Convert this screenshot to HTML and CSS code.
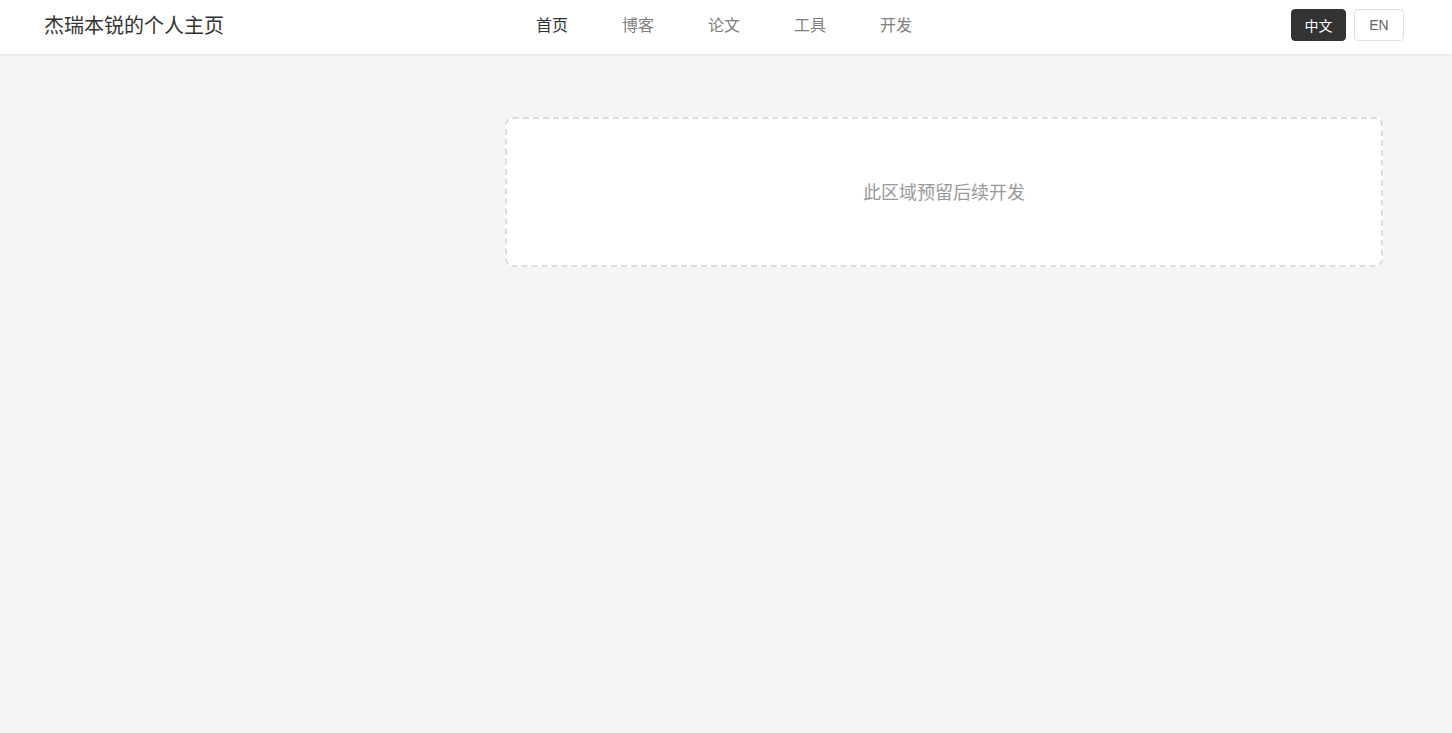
FILE: index.html
```html
<!DOCTYPE html>
<html lang="zh-CN">
<head>
    <meta charset="UTF-8">
    <meta name="viewport" content="width=device-width, initial-scale=1.0">
    <title>杰瑞本锐的个人主页</title>
    <link rel="stylesheet" href="styles.css">
</head>
<body>

    <header class="site-header">
        <div class="logo">杰瑞本锐的个人主页</div>
        <nav class="main-nav">
            <a href="#" class="active">首页</a>
            <a href="#">博客</a>
            <a href="#">论文</a>
            <a href="#">工具</a>
            <a href="#">开发</a>
        </nav>
        <div class="lang-switch">
            <button class="lang-btn current">中文</button>
            <button class="lang-btn">EN</button>
        </div>
    </header>

    <main class="page">
        <aside class="sidebar"></aside>
        <section class="content">
            <div class="placeholder">此区域预留后续开发</div>
        </section>
    </main>

</body>
</html>
```

FILE: styles.css
```css
* {
    box-sizing: border-box;
}
body {
    margin: 0;
    font-family: "Noto Sans CJK SC", "Liberation Sans", sans-serif;
    background-color: #f5f5f5;
    color: #333;
}
.site-header {
    height: 54px;
    background-color: #fff;
    box-shadow: 0 1px 3px rgba(0, 0, 0, 0.08);
    display: grid;
    grid-template-columns: 1fr auto 1fr;
    align-items: center;
    padding: 0 48px 6px 44px;
}
.logo {
    font-size: 20px;
    font-weight: 400;
    color: #333;
}
.main-nav {
    display: flex;
    gap: 54px;
}
.main-nav a {
    font-size: 16px;
    color: #808080;
    text-decoration: none;
}
.main-nav a.active {
    color: #333;
}
.lang-switch {
    display: flex;
    justify-content: flex-end;
    gap: 8px;
    margin-top: 2px;
}
.lang-btn {
    height: 32px;
    min-width: 50px;
    padding: 0 12.5px;
    font-family: "Liberation Sans", "Noto Sans CJK SC", sans-serif;
    font-size: 14px;
    color: #666;
    background-color: #fff;
    border: 1px solid #e0e0e0;
    border-radius: 4px;
}
.lang-btn.current {
    color: #fff;
    background-color: #333;
    border-color: #333;
}
.page {
    display: grid;
    grid-template-columns: 425px 1fr;
    gap: 32px;
    padding: 63px 69px 0 48px;
}
.placeholder {
    height: 150px;
    padding-bottom: 2px;
    border: 2px dashed #ddd;
    border-radius: 8px;
    background-color: #fff;
    display: flex;
    align-items: center;
    justify-content: center;
    font-size: 18px;
    color: #999;
}
```
